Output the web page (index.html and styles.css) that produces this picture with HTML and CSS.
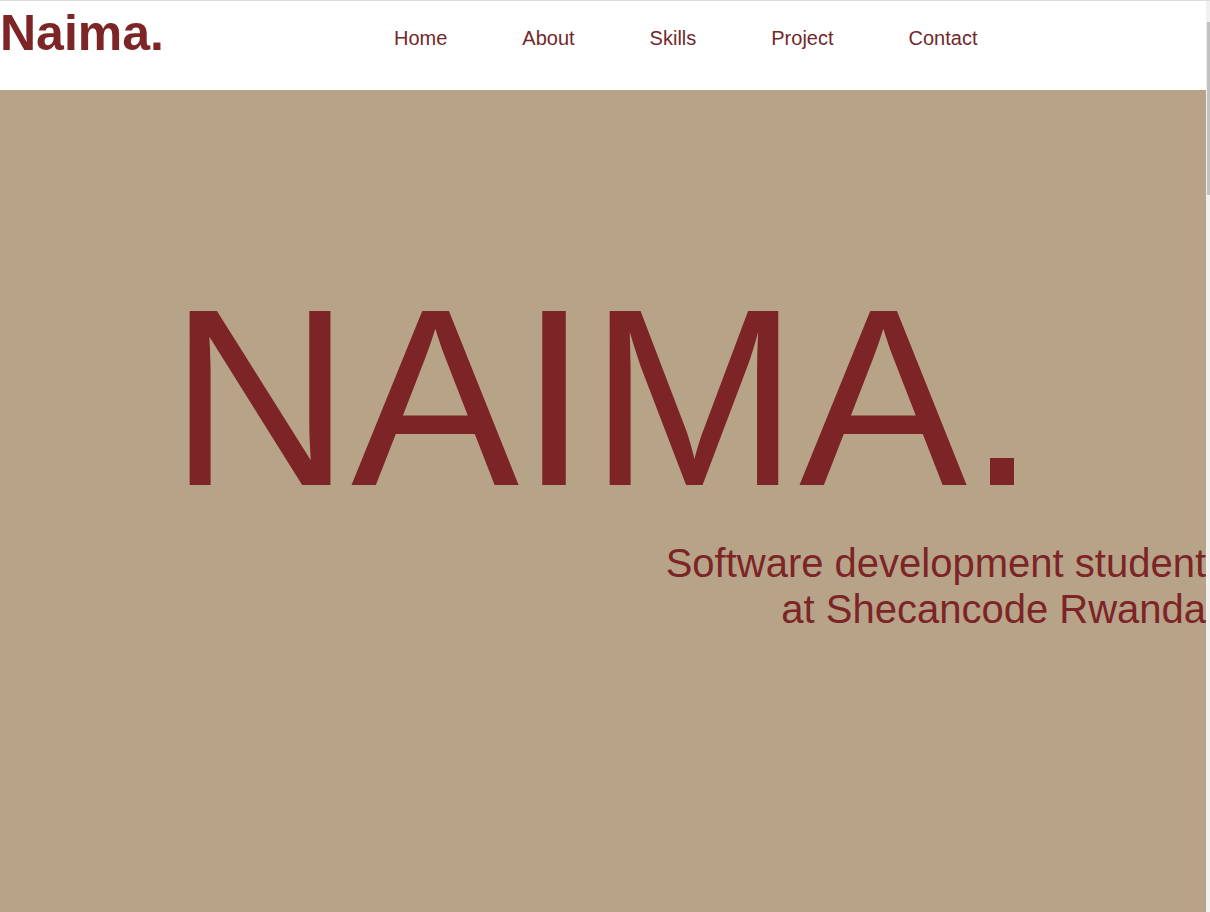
FILE: index.html
```html
<!DOCTYPE html>
<html lang="en">
<head>
<meta charset="utf-8">
<title>Naima.</title>
<link rel="stylesheet" href="styles.css">
</head>
<body>
<div class="window">
  <div class="page">
    <header class="header">
      <div class="logo">Naima.</div>
      <nav class="nav">
        <a href="#home">Home</a>
        <a href="#about">About</a>
        <a href="#skills">Skills</a>
        <a href="#project">Project</a>
        <a href="#contact">Contact</a>
      </nav>
    </header>
    <section class="hero" id="home">
      <h1 class="hero-title">NAIMA.</h1>
      <p class="hero-sub">Software development student<br>at Shecancode Rwanda</p>
    </section>
  </div>
  <div class="scrollbar"><div class="thumb"></div></div>
</div>
</body>
</html>
```

FILE: styles.css
```css
html, body {
  margin: 0;
  padding: 0;
  height: 100%;
  overflow: hidden;
}
body {
  font-family: "Liberation Sans", Arial, sans-serif;
  color: #7d2427;
  background: #ffffff;
}
.window {
  display: flex;
  height: 912px;
  border-top: 1px solid #dddddd;
  box-sizing: border-box;
}
.page {
  flex: 1;
  display: flex;
  flex-direction: column;
  min-width: 0;
}
.header {
  height: 89px;
  display: flex;
  align-items: flex-start;
  background: #ffffff;
}
.logo {
  font-size: 50px;
  line-height: 50px;
  font-weight: bold;
  padding-top: 7px;
  margin-left: 0;
  color: #7d2427;
}
.nav {
  display: flex;
  gap: 75px;
  margin-left: 230px;
  padding-top: 27px;
}
.nav a {
  font-size: 20px;
  line-height: 20px;
  color: #72282a;
  text-decoration: none;
}
.hero {
  flex: 1;
  background: #b7a488;
  padding-top: 182px;
  display: flex;
  flex-direction: column;
}
.hero-title {
  margin: 0;
  font-size: 252px;
  line-height: 252px;
  font-weight: normal;
  text-align: center;
  color: #7d2427;
}
.hero-sub {
  margin: 16px 0 0 0;
  font-size: 40px;
  line-height: 46px;
  text-align: right;
  white-space: nowrap;
  color: #7d2427;
}
.scrollbar {
  width: 4px;
  background: #f1f1f1;
}
.thumb {
  margin-top: 21px;
  margin-left: 1px;
  height: 173px;
  background: #c1c1c1;
}
```
